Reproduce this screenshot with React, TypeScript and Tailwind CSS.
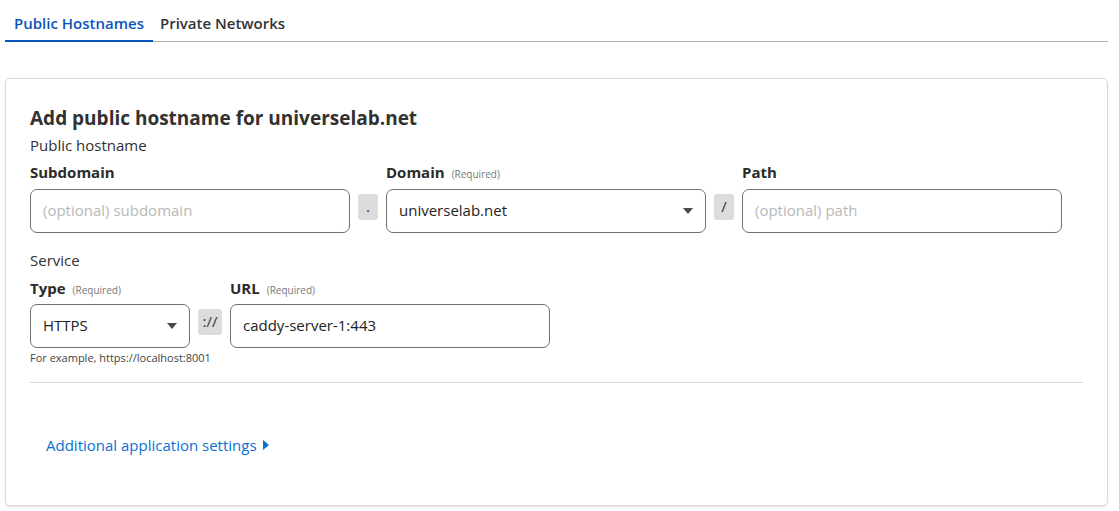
function Sep({ children, w = "w-[20px]" }: { children: React.ReactNode; w?: string }) {
  return (
    <div className={`${w} h-[26px] mt-[5px] rounded-[3px] bg-[#dcdcdc] flex items-center justify-center text-[15px] text-[#333] shrink-0`}>
      {children}
    </div>
  );
}

function Caret() {
  return (
    <svg width="10" height="6" viewBox="0 0 10 6" className="shrink-0">
      <path d="M0 0h10L5 6z" fill="#4a4a4a" />
    </svg>
  );
}

function Label({ text, req }: { text: string; req?: boolean }) {
  return (
    <div className="h-[24px] flex items-center gap-[7px] mb-[4px]">
      <span className="text-[15px] font-bold text-[#2b2b2b]">{text}</span>
      {req && <span className="text-[10px] text-[#777] mt-[3px]">(Required)</span>}
    </div>
  );
}

export default function App() {
  const field = "h-[44px] rounded-[7px] border border-[#6f6f6f] bg-white px-[12px] flex items-center text-[15px]";
  return (
    <div className="min-h-screen bg-white text-[#313131]" style={{ fontFamily: '"Open Sans", "Segoe UI", sans-serif' }}>
      {/* Tabs */}
      <div className="ml-[5px] mr-[11px] pt-[12px] flex border-b border-[#b4b4b4]">
        <div className="px-[9px] pb-[5px] border-b-2 border-[#0b55b8] -mb-px text-[15px] font-semibold text-[#0b55b8]">
          Public Hostnames
        </div>
        <div className="px-[7px] pb-[5px] text-[15px] font-semibold text-[#333]">Private Networks</div>
      </div>

      {/* Card */}
      <div className="ml-[5px] mr-[11px] mt-[36px] rounded-[5px] border border-[#dadada] shadow-[0_1px_2px_rgba(0,0,0,0.12)] px-[24px] pt-[24px] pb-[48px]">
        <h2 className="text-[19px] font-bold text-[#313131] leading-[30px]">Add public hostname for universelab.net</h2>
        <div className="text-[15px] leading-[22px] mt-[1px]">Public hostname</div>

        <div className="flex mt-[5px]">
          <div className="w-[320px]">
            <Label text="Subdomain" />
            <div className={`${field} text-[#b9b9b9]`}>(optional) subdomain</div>
          </div>
          <div className="mx-[8px] pt-[28px]"><Sep>.</Sep></div>
          <div className="w-[320px]">
            <Label text="Domain" req />
            <div className={`${field} justify-between`}>
              <span className="text-[#222]">universelab.net</span>
              <Caret />
            </div>
          </div>
          <div className="mx-[8px] pt-[28px]"><Sep>/</Sep></div>
          <div className="w-[320px]">
            <Label text="Path" />
            <div className={`${field} text-[#b9b9b9]`}>(optional) path</div>
          </div>
        </div>

        <div className="text-[15px] leading-[22px] mt-[16px]">Service</div>
        <div className="flex mt-[6px]">
          <div className="w-[160px]">
            <div className="h-[24px] flex items-center gap-[7px] mb-[3px]">
              <span className="text-[15px] font-bold text-[#2b2b2b]">Type</span>
              <span className="text-[10px] text-[#777] mt-[3px]">(Required)</span>
            </div>
            <div className={`${field} justify-between`}>
              <span className="text-[#222]">HTTPS</span>
              <Caret />
            </div>
            <div className="text-[11px] text-[#444] mt-[2px] whitespace-nowrap">For example, https://localhost:8001</div>
          </div>
          <div className="mx-[8px] pt-[27px]"><Sep w="w-[24px]">://</Sep></div>
          <div className="w-[320px]">
            <div className="h-[24px] flex items-center gap-[7px] mb-[3px]">
              <span className="text-[15px] font-bold text-[#2b2b2b]">URL</span>
              <span className="text-[10px] text-[#777] mt-[3px]">(Required)</span>
            </div>
            <div className={field}>
              <span className="text-[#222]">caddy-server-1:443</span>
            </div>
          </div>
        </div>

        <div className="border-t border-[#d6d6d6] mt-[16px]" />

        <div className="mt-[51px] ml-[16px] flex items-center gap-[6px] text-[15px] text-[#0a6fd6]">
          Additional application settings
          <svg width="6" height="10" viewBox="0 0 6 10"><path d="M0 0l6 5-6 5z" fill="#0a6fd6" /></svg>
        </div>
      </div>
    </div>
  );
}
